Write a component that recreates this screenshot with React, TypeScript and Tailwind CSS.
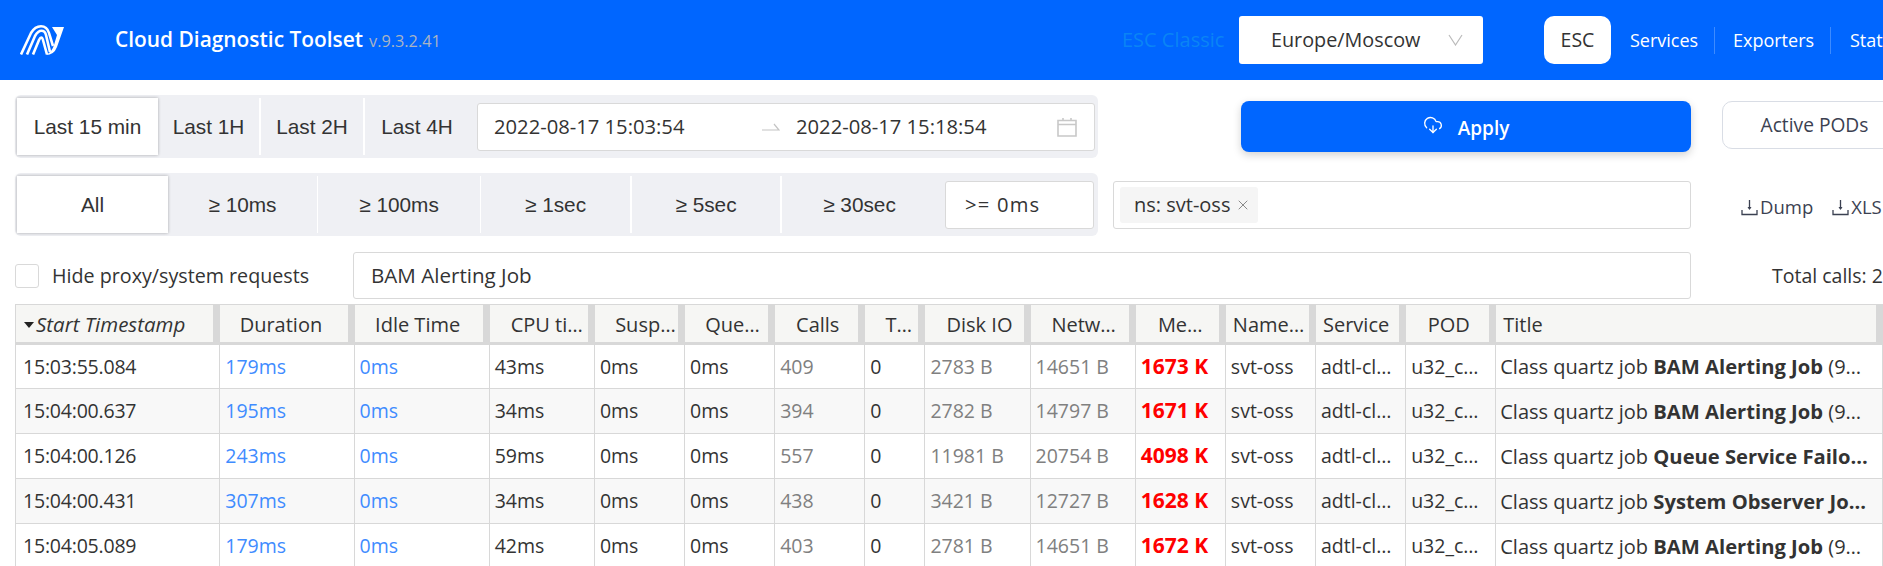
import { CloudDownload, X } from 'lucide-react'

const rangeTabs = [
  { label: 'Last 1H', className: 'w-[103px] border-r-2' },
  { label: 'Last 2H', className: 'w-[104px] border-r-2' },
  { label: 'Last 4H', className: 'w-[104px]' },
]

const durationTabs = [
  { label: '≥ 10ms', className: 'w-[150px] border-r' },
  { label: '≥ 100ms', className: 'w-[163px] border-r' },
  { label: '≥ 1sec', className: 'w-[151px] border-r-2' },
  { label: '≥ 5sec', className: 'w-[150px] border-r-2' },
  { label: '≥ 30sec', className: 'w-[155px]' },
]

// header labels are not centred the same way in every column, hence the per-column padding
const columns = [
  { label: 'Start Timestamp', className: 'w-[204px] pl-[8px]' },
  { label: 'Duration', className: 'w-[134px] pl-[4px] pr-[16px] text-center' },
  { label: 'Idle Time', className: 'w-[135px] pl-[4px] pr-[12px] text-center' },
  { label: 'CPU ti…', className: 'w-[105px] pl-[14px] pr-[4px] text-center' },
  { label: 'Susp…', className: 'w-[90px] pl-[16px] pr-[4px] text-center' },
  { label: 'Que…', className: 'w-[90px] pl-[10px] pr-[4px] text-center' },
  { label: 'Calls', className: 'w-[90px] pl-[4px] pr-[8px] text-center' },
  { label: 'T…', className: 'w-[60px] pl-[12px] pr-[4px] text-center' },
  { label: 'Disk IO', className: 'w-[105px] pl-[8px] pr-[4px] text-center' },
  { label: 'Netw…', className: 'w-[105px] pl-[6px] pr-[4px] text-center' },
  { label: 'Me…', className: 'w-[90px] px-[4px] text-center' },
  { label: 'Name…', className: 'w-[90px] pl-[7px] text-left' },
  { label: 'Service', className: 'w-[90px] pl-[7px] text-left' },
  { label: 'POD', className: 'w-[90px] pl-[4px] pr-[8px] text-center' },
  { label: 'Title', className: 'w-[386px] pl-[7px] text-left' },
  { label: '', className: 'w-[20px]' },
]

const rows = [
  { time: '15:03:55.084', duration: '179ms', cpu: '43ms', calls: 409, disk: '2783 B', net: '14651 B', mem: '1673 K', job: 'BAM Alerting Job', tail: ' (9…' },
  { time: '15:04:00.637', duration: '195ms', cpu: '34ms', calls: 394, disk: '2782 B', net: '14797 B', mem: '1671 K', job: 'BAM Alerting Job', tail: ' (9…' },
  { time: '15:04:00.126', duration: '243ms', cpu: '59ms', calls: 557, disk: '11981 B', net: '20754 B', mem: '4098 K', job: 'Queue Service Failo…', tail: '' },
  { time: '15:04:00.431', duration: '307ms', cpu: '34ms', calls: 438, disk: '3421 B', net: '12727 B', mem: '1628 K', job: 'System Observer Jo…', tail: '' },
  { time: '15:04:05.089', duration: '179ms', cpu: '42ms', calls: 403, disk: '2781 B', net: '14651 B', mem: '1672 K', job: 'BAM Alerting Job', tail: ' (9…' },
]

const cell = 'pl-[5px] border-x border-[#d8d8d8]'

function Logo() {
  return (
    <svg viewBox="0 0 44 30" className="w-[44px] h-[30px] shrink-0" fill="none" stroke="white" strokeWidth="2.6">
      <path d="M1 29.5 L11 8 Q15 1.3 21 1.3 Q27 1.3 29 8 L33 21" />
      <path d="M7 29.5 L15 11 Q18 5.8 21.5 5.8 Q25 5.8 26 10 L30 27" />
      <path d="M13 29.5 L19 15 Q21.5 10 23 15 L27 29.5" />
      <path d="M32 2 H44 L37 22 Q34 30 26 30 Q32 27 34 20 L37 10 Z" fill="white" stroke="none" />
    </svg>
  )
}

function CalendarIcon() {
  return (
    <svg viewBox="0 0 20 20" className="w-[20px] h-[20px]" fill="none" stroke="#c8c8c8" strokeWidth="1.6">
      <path d="M1 3.5 H19 V19 H1 Z M1 7.5 H19 M6 1 V4 M14 1 V4" />
    </svg>
  )
}

function DownloadIcon() {
  return (
    <svg viewBox="0 0 17 17" className="w-[17px] h-[17px]" fill="none" stroke="#3b4151" strokeWidth="1.3">
      <path d="M8.5 1 V10 M1 11 V15.5 H16 V11" />
      <path d="M6.5 8 H10.5 L8.5 11 Z" fill="#3b4151" stroke="none" />
    </svg>
  )
}

export default function App() {
  return (
    <div className="w-[1883px] h-[566px] overflow-hidden bg-white text-[#333] font-['Open_Sans',sans-serif]">
      <header className="h-20 bg-[#0066ff] flex items-center">
        <div className="ml-5 shrink-0"><Logo /></div>
        <div className="ml-[51px] w-[1007px] shrink-0 flex items-baseline whitespace-nowrap">
          <span className="text-[20.9px] font-semibold text-white">Cloud Diagnostic Toolset</span>
          <span className="ml-[6px] text-[16.3px] text-[#a9b4c4]">v.9.3.2.41</span>
        </div>
        <span className="w-[117px] shrink-0 text-[20px] text-[#0a84f5] whitespace-nowrap">ESC Classic</span>
        <div className="w-[244px] h-12 shrink-0 bg-white rounded-[3px] flex items-center pl-8 pr-[20px] justify-between">
          <span className="text-[19.8px] text-[#333] whitespace-nowrap">Europe/Moscow</span>
          <svg viewBox="0 0 15 12" className="w-[15px] h-[12px]" fill="none" stroke="#bbb" strokeWidth="1.2"><path d="M1 1 L7.5 11 L14 1" /></svg>
        </div>
        <div className="ml-[61px] w-[67px] h-12 shrink-0 bg-white rounded-[10px] flex items-center justify-center text-[19.5px]">ESC</div>
        <nav className="ml-[19px] shrink-0 flex items-center text-white text-[18px] whitespace-nowrap">
          <span className="w-[85px] h-[27px] leading-[27px] border-r border-[#3d8bff]">Services</span>
          <span className="w-[116px] h-[27px] leading-[27px] pl-[18px] border-r border-[#3d8bff]">Exporters</span>
          <span className="pl-[19px]">Status</span>
        </nav>
      </header>

      <div className="flex mt-[15px] ml-[15px]">
        <div className="w-[1083px] h-[63px] shrink-0 bg-[#eff0f4] rounded-[6px] flex items-center pl-[2px] font-['Liberation_Sans',Arial,sans-serif] text-[20.8px] whitespace-nowrap">
          <div className="w-[141px] h-[57px] bg-white shadow-[0_0_3px_rgba(0,0,0,0.3)] flex items-center justify-center">Last 15 min</div>
          {rangeTabs.map((tab) => (
            <div key={tab.label} className={`h-[57px] border-white flex items-center justify-center ${tab.className}`}>{tab.label}</div>
          ))}
          <div className="ml-[8px] w-[618px] h-[48px] bg-white border border-[#d9d9d9] rounded-[3px] flex items-center pl-[16px] pr-[17px] font-['Open_Sans',sans-serif] text-[20.2px]">
            <span className="w-[268px]">2022-08-17 15:03:54</span>
            <svg viewBox="0 0 18 8" className="w-[18px] h-[8px] mr-[16px]" fill="none" stroke="#c4c4c4" strokeWidth="1.2"><path d="M0 7 H17 L12 1" /></svg>
            <span>2022-08-17 15:18:54</span>
            <span className="ml-auto"><CalendarIcon /></span>
          </div>
        </div>
        <button className="ml-[143px] mt-[6px] w-[450px] h-[51px] shrink-0 bg-[#0066ff] rounded-[8px] shadow-[0_3px_8px_rgba(0,0,0,0.18)] flex items-center justify-center text-white text-[19px] font-semibold">
          <CloudDownload className="w-[20px] h-[20px] mr-[15px] -mt-1" strokeWidth={1.6} />
          <span className="mt-[4px]">Apply</span>
        </button>
        <button className="ml-[31px] mt-[6px] w-[185px] h-[48px] shrink-0 bg-white border border-[#d9dde5] rounded-[10px] text-[19.2px] font-medium text-[#3b4151] whitespace-nowrap">Active PODs</button>
      </div>

      <div className="flex mt-[15px] ml-[15px]">
        <div className="w-[1083px] h-[63px] shrink-0 bg-[#eff0f4] rounded-[6px] flex items-center pl-[2px] font-['Liberation_Sans',Arial,sans-serif] text-[20.8px] whitespace-nowrap">
          <div className="w-[151px] h-[57px] bg-white shadow-[0_0_3px_rgba(0,0,0,0.3)] flex items-center justify-center">All</div>
          {durationTabs.map((tab) => (
            <div key={tab.label} className={`h-[57px] border-white flex items-center justify-center ${tab.className}`}>{tab.label}</div>
          ))}
          <div className="ml-[8px] w-[149px] h-[48px] bg-white border border-[#d9d9d9] rounded-[3px] flex items-center pl-[19px] font-['Open_Sans',sans-serif] text-[20.2px] tracking-[1.2px]">&gt;= 0ms</div>
        </div>
        <div className="ml-[15px] w-[578px] h-[48px] mt-[8px] shrink-0 bg-white border border-[#d9d9d9] rounded-[3px] flex items-center pl-[6px]">
          <div className="w-[138px] h-[36px] bg-[#f5f5f5] rounded-[3px] flex items-center pl-[14px] text-[20px] whitespace-nowrap">
            ns: svt-oss
            <X className="w-[16px] h-[16px] ml-[5px] shrink-0 text-[#888]" strokeWidth={1.5} />
          </div>
        </div>
        <div className="ml-[50px] mt-[5px] flex items-center text-[18.5px] font-medium text-[#3b4151] whitespace-nowrap">
          <DownloadIcon /><span className="ml-[2px] mr-[19px]">Dump</span>
          <DownloadIcon /><span className="ml-[2px]">XLS</span>
        </div>
      </div>

      <div className="flex items-center mt-[16px] ml-[15px] h-[47px]">
        <div className="w-[24px] h-[24px] shrink-0 bg-white border border-[#d9d9d9] rounded-[3px]" />
        <span className="ml-[13px] w-[301px] shrink-0 text-[19.7px] whitespace-nowrap">Hide proxy/system requests</span>
        <div className="w-[1338px] h-[47px] shrink-0 bg-white border border-[#d9d9d9] rounded-[3px] flex items-center pl-[17px] text-[20.6px]">BAM Alerting Job</div>
        <span className="ml-[81px] text-[19.5px] whitespace-nowrap">Total calls: 24</span>
      </div>

      <table className="mt-[5px] ml-[15px] w-[1888px] table-fixed border-collapse text-[19.5px] whitespace-nowrap">
        <thead>
          <tr className="h-[39px] bg-[#f6f6f4] border-t border-b-[3px] border-[#d8d8d8]">
            {columns.map((col, i) => (
              <th key={i} className={`relative pt-[2px] font-normal text-[20px] border-l border-[#d8d8d8] ${col.className}`}>
                {i === 0 ? (
                  <span className="flex items-center italic text-[20.5px]">
                    <svg viewBox="0 0 10 6" className="w-[10px] h-[6px] mr-[2px] shrink-0"><path d="M0 0 H10 L5 6 Z" fill="#222" /></svg>
                    {col.label}
                  </span>
                ) : col.label}
                <span className="absolute right-0 top-0 bottom-0 w-[6px] bg-[#d8d8d8]" />
              </th>
            ))}
          </tr>
        </thead>
        <tbody>
          {rows.map((row, i) => (
            <tr key={i} className={`h-[45px] border-b border-[#d8d8d8] ${i % 2 === 1 ? 'bg-[#f8f8f8]' : 'bg-white'}`}>
              <td className="pl-[7px] border-x border-[#d8d8d8] tracking-[-0.2px]">{row.time}</td>
              <td className={`${cell} text-[#3f8cff]`}>{row.duration}</td>
              <td className={`${cell} text-[#3f8cff]`}>0ms</td>
              <td className={cell}>{row.cpu}</td>
              <td className={cell}>0ms</td>
              <td className={cell}>0ms</td>
              <td className={`${cell} text-[#808080]`}>{row.calls}</td>
              <td className={cell}>0</td>
              <td className={`${cell} text-[#808080]`}>{row.disk}</td>
              <td className={`${cell} text-[#808080]`}>{row.net}</td>
              <td className={`${cell} text-[#f00] font-bold text-[21px]`}>{row.mem}</td>
              <td className={cell}>svt-oss</td>
              <td className={cell}>adtl-cl…</td>
              <td className={cell}>u32_c…</td>
              <td className="pl-[4px] border-x border-[#d8d8d8] text-[20px]">Class quartz job <b className="text-[20.2px]">{row.job}</b>{row.tail}</td>
              <td className="border-x border-[#d8d8d8]" />
            </tr>
          ))}
        </tbody>
      </table>
    </div>
  )
}
